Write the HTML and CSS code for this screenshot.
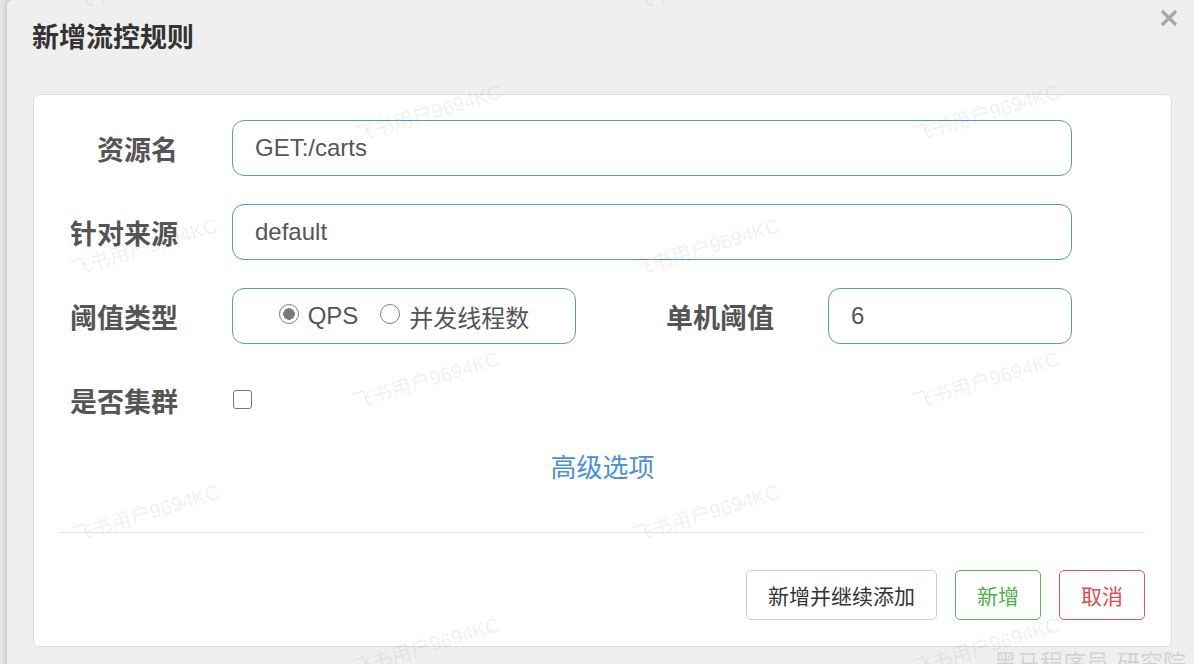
FILE: index.html
```html
<!DOCTYPE html>
<html lang="zh-CN">
<head>
<meta charset="utf-8">
<title>新增流控规则</title>
<link rel="stylesheet" href="styles.css">
</head>
<body>
<div class="dialog">
  <div class="dialog-header">
    <h1 class="title">新增流控规则</h1>
    <button class="close" aria-label="关闭">
      <svg width="18" height="18" viewBox="0 0 18 18"><path d="M2 2 L16 16 M16 2 L2 16" stroke="#a8a8a8" stroke-width="3.2" stroke-linecap="butt"/></svg>
    </button>
  </div>
  <div class="card">
    <div class="form">
      <div class="row">
        <label class="label">资源名</label>
        <input class="input" type="text" value="GET:/carts">
      </div>
      <div class="row">
        <label class="label">针对来源</label>
        <input class="input" type="text" value="default">
      </div>
      <div class="row">
        <label class="label">阈值类型</label>
        <div class="radio-box">
          <label class="radio-item"><input class="radio" type="radio" name="t" checked><span>QPS</span></label>
          <label class="radio-item"><input class="radio" type="radio" name="t"><span>并发线程数</span></label>
        </div>
        <label class="label label-wide">单机阈值</label>
        <input class="input" type="text" value="6">
      </div>
      <div class="row">
        <label class="label">是否集群</label>
        <input class="checkbox" type="checkbox">
      </div>
    </div>
    <div class="advanced"><a class="advanced-link">高级选项</a></div>
    <div class="divider"></div>
    <div class="footer">
      <button class="btn">新增并继续添加</button>
      <button class="btn btn-green">新增</button>
      <button class="btn btn-red">取消</button>
    </div>
  </div>
</div>
<div class="watermarks">
  <span class="wm" style="left:70px;top:-32px">飞书用户9694KC</span>
  <span class="wm" style="left:630px;top:-32px">飞书用户9694KC</span>
  <span class="wm" style="left:352px;top:100px">飞书用户9694KC</span>
  <span class="wm" style="left:910px;top:100px">飞书用户9694KC</span>
  <span class="wm" style="left:68px;top:234px">飞书用户9694KC</span>
  <span class="wm" style="left:630px;top:234px">飞书用户9694KC</span>
  <span class="wm" style="left:350px;top:367px">飞书用户9694KC</span>
  <span class="wm" style="left:910px;top:367px">飞书用户9694KC</span>
  <span class="wm" style="left:70px;top:500px">飞书用户9694KC</span>
  <span class="wm" style="left:630px;top:500px">飞书用户9694KC</span>
  <span class="wm" style="left:350px;top:633px">飞书用户9694KC</span>
  <span class="wm" style="left:910px;top:633px">飞书用户9694KC</span>
  <span class="brand">黑马程序员-研究院</span>
</div>
</body>
</html>
```
FILE: styles.css
```css
html, body {
  margin: 0;
  padding: 0;
}
body {
  background: #e4e4e4;
  width: 1194px;
  height: 664px;
  overflow: hidden;
  position: relative;
  font-family: "Liberation Sans", "Noto Sans CJK SC", sans-serif;
}
.dialog {
  margin-left: 7px;
  height: 700px;
  background: #efefef;
  border-radius: 6px 0 0 0;
  box-shadow: 0 0 6px rgba(0, 0, 0, 0.22);
}
.dialog-header {
  display: flex;
  justify-content: space-between;
  align-items: flex-start;
  height: 94px;
  box-sizing: border-box;
  padding: 0 16px 0 25px;
}
.title {
  margin: 18px 0 0;
  font-family: "Noto Sans CJK SC", sans-serif;
  font-size: 27px;
  line-height: 36px;
  font-weight: bold;
  color: #333;
}
.close {
  margin-top: 9px;
  width: 18px;
  height: 18px;
  padding: 0;
  border: 0;
  background: transparent;
  display: flex;
}
.card {
  margin: 0 22px 0 26px;
  background: #fff;
  border: 1px solid #dcdcdc;
  border-radius: 6px;
  padding: 25px 26px 26px;
}
.form {
  display: flex;
  flex-direction: column;
  gap: 28px;
  padding-right: 73px;
}
.row {
  display: flex;
  align-items: center;
  height: 56px;
}
.label {
  flex: none;
  width: 118px;
  margin-right: 54px;
  text-align: right;
  font-family: "Noto Sans CJK SC", sans-serif;
  font-size: 27px;
  font-weight: bold;
  color: #555;
}
.label-wide {
  width: 198px;
}
.input {
  flex: 1;
  min-width: 0;
  height: 56px;
  box-sizing: border-box;
  border: 1px solid #5a96d2;
  border-radius: 12px;
  padding: 0 22px;
  font-family: "Liberation Sans", "Noto Sans CJK SC", sans-serif;
  font-size: 24px;
  color: #555;
  outline: none;
  background: #fff;
}
.radio-box {
  flex: none;
  width: 344px;
  height: 56px;
  box-sizing: border-box;
  border: 1px solid #5a96d2;
  border-radius: 12px;
  display: flex;
  align-items: center;
  justify-content: center;
  gap: 22px;
}
.radio-item {
  display: flex;
  align-items: center;
  gap: 9px;
  font-size: 24px;
  color: #555;
  font-family: "Liberation Sans", "Noto Sans CJK SC", sans-serif;
}
.radio {
  appearance: none;
  -webkit-appearance: none;
  margin: 0;
  width: 20px;
  height: 20px;
  box-sizing: border-box;
  border: 1.5px solid #808080;
  border-radius: 50%;
  background: #fff;
  position: relative;
  top: -2px;
}
.radio:checked {
  background: radial-gradient(circle, #7a7a7a 0 5.5px, #fff 6px);
}
.checkbox {
  appearance: none;
  -webkit-appearance: none;
  margin: 0 0 0 1px;
  width: 19px;
  height: 19px;
  box-sizing: border-box;
  border: 1.5px solid #777;
  border-radius: 3px;
  background: #fff;
  position: relative;
  top: -1px;
}
.advanced {
  margin-top: 20px;
  text-align: center;
  height: 36px;
}
.advanced-link {
  display: inline-block;
  font-family: "Noto Sans CJK SC", sans-serif;
  font-size: 26px;
  line-height: 36px;
  color: #4a90d9;
}
.divider {
  margin-top: 48px;
  border-top: 1px solid #e3e3e3;
}
.footer {
  display: flex;
  justify-content: flex-end;
  gap: 18px;
  margin-top: 37px;
}
.btn {
  height: 50px;
  padding: 0 21px;
  font-family: "Noto Sans CJK SC", sans-serif;
  font-size: 21px;
  border-radius: 5px;
  background: #fff;
  border: 1px solid #cfcfcf;
  color: #333;
}
.btn-green {
  border-color: #5cb85c;
  color: #4cae4c;
}
.btn-red {
  border-color: #e8545f;
  color: #e04b56;
}
.watermarks {
  position: absolute;
  inset: 0;
  overflow: hidden;
  pointer-events: none;
}
.wm {
  position: absolute;
  width: 160px;
  line-height: 24px;
  white-space: nowrap;
  font-family: "Liberation Sans", "Noto Sans CJK SC", sans-serif;
  font-size: 20px;
  color: rgba(0, 0, 0, 0.07);
  transform: rotate(-17deg);
  transform-origin: center;
}
.brand {
  position: absolute;
  left: 994px;
  top: 646px;
  white-space: nowrap;
  font-family: "Noto Sans CJK SC", sans-serif;
  font-size: 23px;
  line-height: 30px;
  color: rgba(0, 0, 0, 0.15);
}
```
